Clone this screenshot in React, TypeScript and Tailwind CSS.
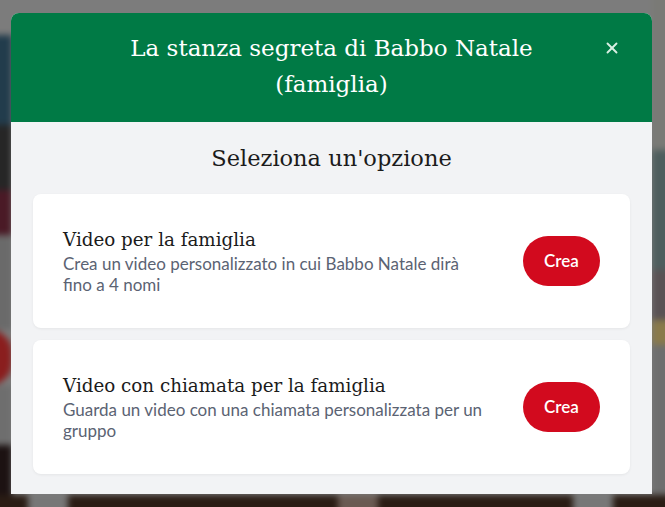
import * as React from "react";
import { X } from "lucide-react";

const OPTIONS = [
  {
    id: "family",
    title: "Video per la famiglia",
    text: "Crea un video personalizzato in cui Babbo Natale dirà fino a 4 nomi",
  },
  {
    id: "call",
    title: "Video con chiamata per la famiglia",
    text: "Guarda un video con una chiamata personalizzata per un gruppo",
  },
];

const slab = "font-['DejaVu_Serif',serif]";

// blurred page behind the dialog, painted as strips
function Backdrop() {
  return (
    <div className="absolute -inset-[10px] flex flex-col bg-[#7c7c7c] blur-[3px]">
      <div className="flex flex-1 justify-between">
        <div className="flex w-[22px] flex-col">
          <div className="h-[45px] bg-[#7c7c7c]" />
          <div className="h-[90px] bg-[#223c4c]" />
          <div className="h-[65px] bg-[#262626]" />
          <div className="h-[45px] bg-[#4a1a26]" />
          <div className="h-[95px] bg-[#6a6a6a]" />
          <div className="h-[55px] rounded-r-full bg-[#8a1e1e]" />
          <div className="h-[60px] bg-[#6e6e6e]" />
          <div className="flex-1 bg-[#1c1212]" />
        </div>
        <div className="flex w-[23px] flex-col">
          <div className="h-[160px] bg-[#7a7a76]" />
          <div className="h-[120px] bg-[#4e5e5e]" />
          <div className="h-[50px] bg-[#5a5254]" />
          <div className="h-[25px] bg-[#8a7a4a]" />
          <div className="flex-1 bg-[#6e6e6e]" />
        </div>
      </div>
      <div className="flex h-[22px] bg-[#2a1c14]">
        <div className="ml-[38px] w-[40px] bg-[#777]" />
        <div className="ml-[270px] w-[40px] bg-[#6a5a52]" />
        <div className="ml-[195px] w-[40px] bg-[#777]" />
      </div>
    </div>
  );
}

export default function App() {
  return (
    <div className="relative h-[507px] w-[665px] overflow-hidden font-['Lato',sans-serif]">
      <Backdrop />
      <div className="relative px-[11px] pt-[13px]">
        <div className="w-[641px] overflow-hidden rounded-t-lg bg-[#f2f3f5]">
          <div className="relative flex h-[109px] justify-center bg-[#007a45] pt-[17px]">
            <h1 className={`${slab} max-w-[440px] text-center text-[23px] leading-[36px] text-white`}>
              La stanza segreta di Babbo Natale (famiglia)
            </h1>
            <button className="absolute right-[31px] top-[26px] text-[#d9efe3]">
              <X className="h-[18px] w-[18px]" strokeWidth={2.5} />
            </button>
          </div>
          <div className="px-[22px] pb-[20px]">
            <h2 className={`${slab} py-[22px] text-center text-[22.5px] leading-[28px] text-[#1b1b1b]`}>
              Seleziona un'opzione
            </h2>
            <div className="flex flex-col gap-[12px]">
              {OPTIONS.map((o) => (
                <div
                  key={o.id}
                  className="flex h-[134px] items-center justify-between rounded-lg bg-white px-[30px] shadow-[0_1px_3px_rgba(0,0,0,0.06)]"
                >
                  <div className="w-[425px]">
                    <h3 className={`${slab} text-[18.3px] leading-[26px] text-[#1b1b1b]`}>{o.title}</h3>
                    <p className="text-[17px] leading-[21px] text-[#5b6373]">{o.text}</p>
                  </div>
                  <button className="h-[50px] w-[77px] rounded-full bg-[#d20a1e] text-[17px] font-semibold text-white">
                    Crea
                  </button>
                </div>
              ))}
            </div>
          </div>
        </div>
      </div>
    </div>
  );
}
